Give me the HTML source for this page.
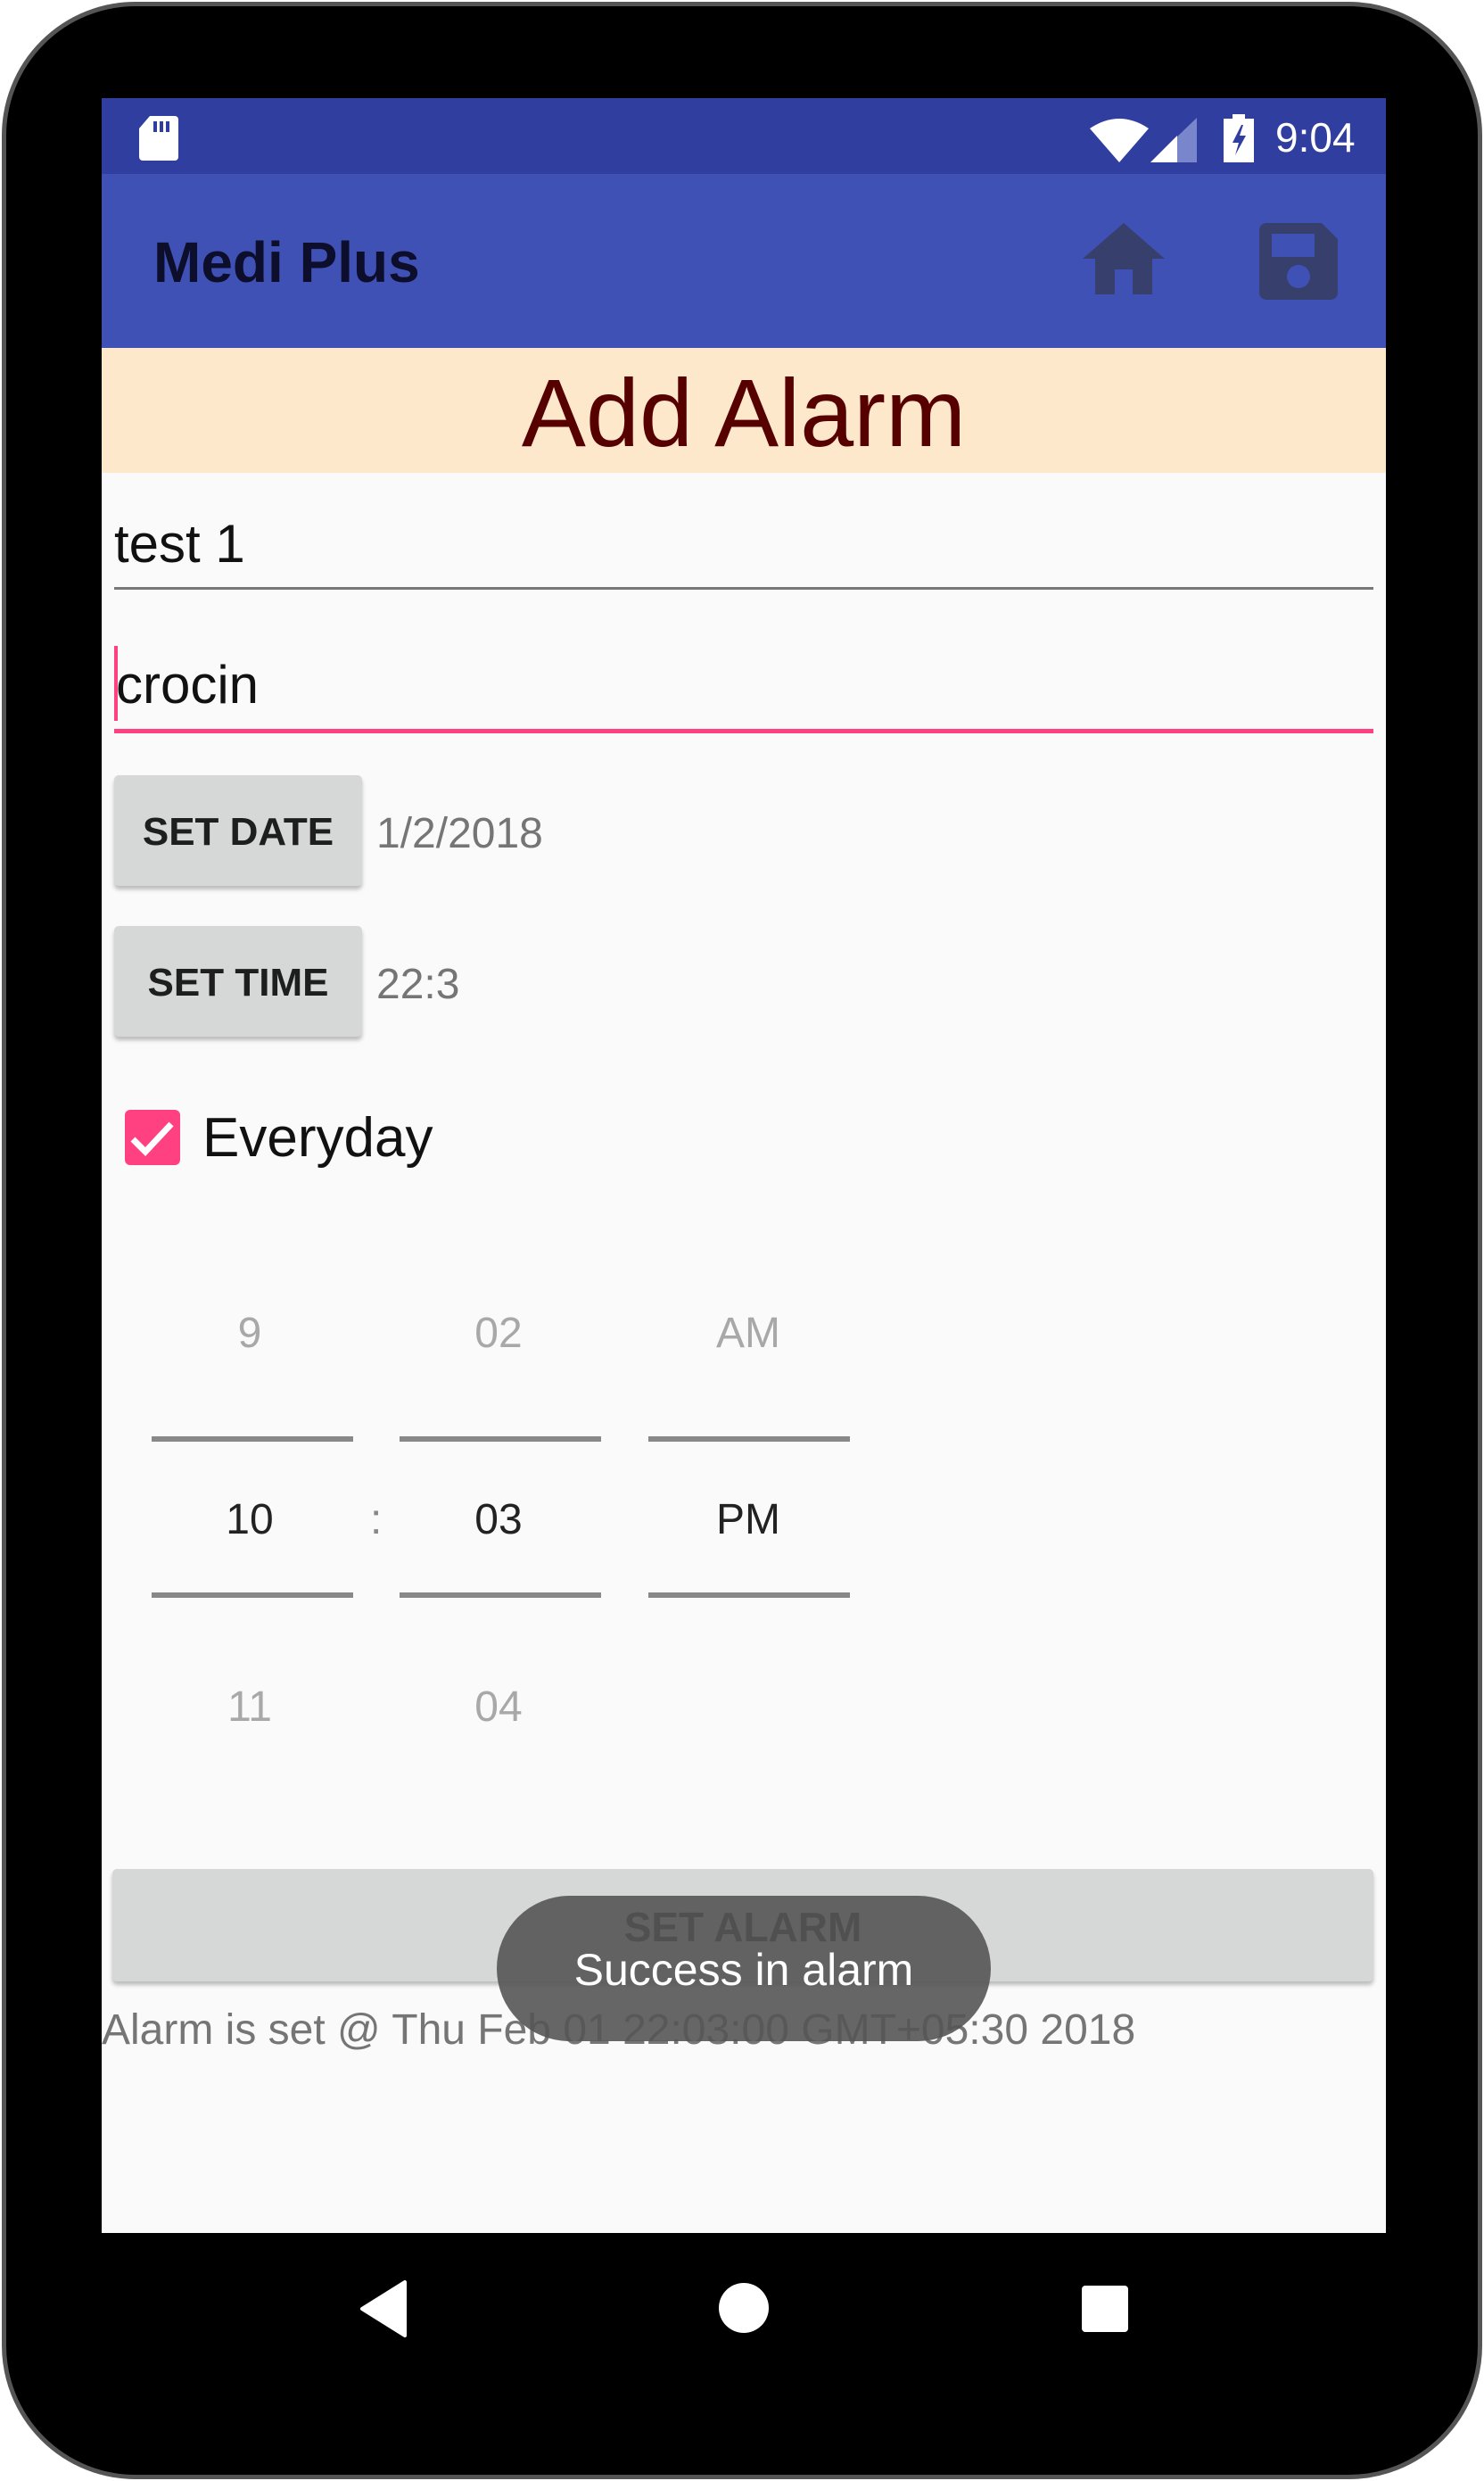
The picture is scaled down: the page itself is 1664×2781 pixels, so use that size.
<!DOCTYPE html>
<html><head><meta charset="utf-8"><style>
*{margin:0;padding:0;box-sizing:border-box}
body{width:1664px;height:2781px;background:#fff;position:relative;overflow:hidden;font-family:"Liberation Sans",sans-serif}
.a{position:absolute}
.frame{left:2px;top:2px;width:1660px;height:2777px;background:#000;border:5px solid #555;border-radius:150px}
.screen{left:114px;top:110px;width:1440px;height:2393px;background:#fafafa;overflow:hidden}
.t{position:absolute;white-space:nowrap;line-height:1}
.btn{background:#d6d7d7;border-radius:5px;box-shadow:0 4px 5px rgba(0,0,0,.25);position:absolute}
.line{position:absolute;height:6px;background:#888}
.pk{position:absolute;width:226px;text-align:center;font-size:48px;line-height:1}
</style></head><body>
<div class="a frame"></div>
<div class="a screen">
  <div class="a" style="left:0;top:0;width:1440px;height:85px;background:#303f9f"></div>
  <svg class="a" style="left:42px;top:20px" width="44" height="50" viewBox="0 0 44 50"><path d="M12 0H40a4 4 0 0 1 4 4V46a4 4 0 0 1-4 4H4a4 4 0 0 1-4-4V14Z" fill="#fff"/><rect x="16" y="6" width="4" height="12" fill="#303f9f"/><rect x="23" y="6" width="4" height="12" fill="#303f9f"/><rect x="30" y="6" width="4" height="12" fill="#303f9f"/></svg>
  <svg class="a" style="left:1108px;top:22px" width="66" height="50" viewBox="0 0 66 50"><path d="M0 12Q33-10 66 12L33 50Z" fill="#fff"/></svg>
  <svg class="a" style="left:1176px;top:22px" width="52" height="50" viewBox="0 0 52 50"><path d="M52 0V50H0Z" fill="#7986cb"/><path d="M30 20V50H0L30 20Z" fill="#fff"/></svg>
  <svg class="a" style="left:1258px;top:18px" width="34" height="54" viewBox="0 0 34 54"><rect x="10" y="0" width="14" height="6" fill="#fff"/><rect x="0" y="5" width="34" height="49" fill="#fff"/><path d="M20 12L10 32H17L13 46L25 24H18L22 12Z" fill="#303f9f"/></svg>
  <div class="t" style="left:1316px;top:21px;font-size:46px;color:#fff">9:04</div>
  <div class="a" style="left:0;top:85px;width:1440px;height:195px;background:#3f51b5"></div>
  <div class="t" style="left:58px;top:152px;font-size:64px;color:#0d0e2b;font-weight:bold">Medi Plus</div>
  <svg class="a" style="left:1100px;top:140px" width="92" height="80" viewBox="0 0 92 80"><path d="M46 0L92 40H78V80H56V52H36V80H14V40H0Z" fill="#373f6c"/></svg>
  <svg class="a" style="left:1298px;top:140px" width="88" height="86" viewBox="0 0 88 86"><path d="M8 0H70L88 18V78a8 8 0 0 1-8 8H8a8 8 0 0 1-8-8V8a8 8 0 0 1 8-8Z" fill="#373f6c"/><rect x="14" y="12" width="48" height="26" fill="#3f51b5"/><circle cx="44" cy="60" r="13" fill="#3f51b5"/></svg>
  <div class="a" style="left:0;top:280px;width:1440px;height:140px;background:#fee8cb"></div>
  <div class="t" style="left:0;width:1440px;text-align:center;top:299px;font-size:108px;color:#560000">Add Alarm</div>
  <div class="t" style="left:14px;top:470px;font-size:60px;color:#111">test 1</div>
  <div class="a" style="left:14px;top:548px;width:1412px;height:3px;background:#777"></div>
  <div class="a" style="left:14px;top:614px;width:4px;height:84px;background:#ff4081"></div>
  <div class="t" style="left:16px;top:628px;font-size:60px;color:#111">crocin</div>
  <div class="a" style="left:14px;top:707px;width:1412px;height:5px;background:#ff4081"></div>
  <div class="btn" style="left:14px;top:759px;width:278px;height:124px"></div>
  <div class="t" style="left:14px;width:278px;text-align:center;top:801px;font-size:44px;font-weight:bold;color:#1e1e1e">SET DATE</div>
  <div class="t" style="left:308px;top:801px;font-size:48px;color:#757575">1/2/2018</div>
  <div class="btn" style="left:14px;top:928px;width:278px;height:124px"></div>
  <div class="t" style="left:14px;width:278px;text-align:center;top:970px;font-size:44px;font-weight:bold;color:#1e1e1e">SET TIME</div>
  <div class="t" style="left:308px;top:970px;font-size:48px;color:#757575">22:3</div>
  <svg class="a" style="left:26px;top:1134px" width="62" height="62" viewBox="0 0 62 62"><rect width="62" height="62" rx="6" fill="#ff4081"/><path d="M9 33L23 47L52 16" stroke="#fff" stroke-width="7" fill="none"/></svg>
  <div class="t" style="left:113px;top:1135px;font-size:62px;color:#111">Everyday</div>
  <div class="pk" style="left:53px;top:1361px;color:#a8a8a8">9</div>
  <div class="pk" style="left:332px;top:1361px;color:#a8a8a8">02</div>
  <div class="pk" style="left:612px;top:1361px;color:#a8a8a8">AM</div>
  <div class="line" style="left:56px;top:1500px;width:226px"></div>
  <div class="line" style="left:334px;top:1500px;width:226px"></div>
  <div class="line" style="left:613px;top:1500px;width:226px"></div>
  <div class="pk" style="left:53px;top:1570px;color:#222">10</div>
  <div class="t" style="left:301px;top:1570px;font-size:48px;color:#888">:</div>
  <div class="pk" style="left:332px;top:1570px;color:#222">03</div>
  <div class="pk" style="left:612px;top:1570px;color:#222">PM</div>
  <div class="line" style="left:56px;top:1675px;width:226px"></div>
  <div class="line" style="left:334px;top:1675px;width:226px"></div>
  <div class="line" style="left:613px;top:1675px;width:226px"></div>
  <div class="pk" style="left:53px;top:1780px;color:#a8a8a8">11</div>
  <div class="pk" style="left:332px;top:1780px;color:#a8a8a8">04</div>
  <div class="btn" style="left:12px;top:1985px;width:1414px;height:126px"></div>
  <div class="t" style="left:12px;width:1414px;text-align:center;top:2027px;font-size:46px;font-weight:bold;color:#1e1e1e">SET ALARM</div>
  <div class="t" style="left:0;top:2142px;font-size:48px;color:#757575">Alarm is set @ Thu Feb 01 22:03:00 GMT+05:30 2018</div>
  <div class="a" style="left:443px;top:2015px;width:554px;height:163px;border-radius:82px;background:rgba(85,85,85,.9)"></div>
  <div class="t" style="left:443px;width:554px;text-align:center;top:2073px;font-size:50px;color:#fff">Success in alarm</div>
</div>
<svg class="a" style="left:400px;top:2556px" width="60" height="64" viewBox="0 0 60 64"><path d="M54 2V62L6 32Z" fill="#fff" stroke="#fff" stroke-width="4" stroke-linejoin="round"/></svg>
<div class="a" style="left:806px;top:2559px;width:56px;height:56px;border-radius:50%;background:#fff"></div>
<div class="a" style="left:1213px;top:2562px;width:52px;height:52px;border-radius:4px;background:#fff"></div>
</body></html>
